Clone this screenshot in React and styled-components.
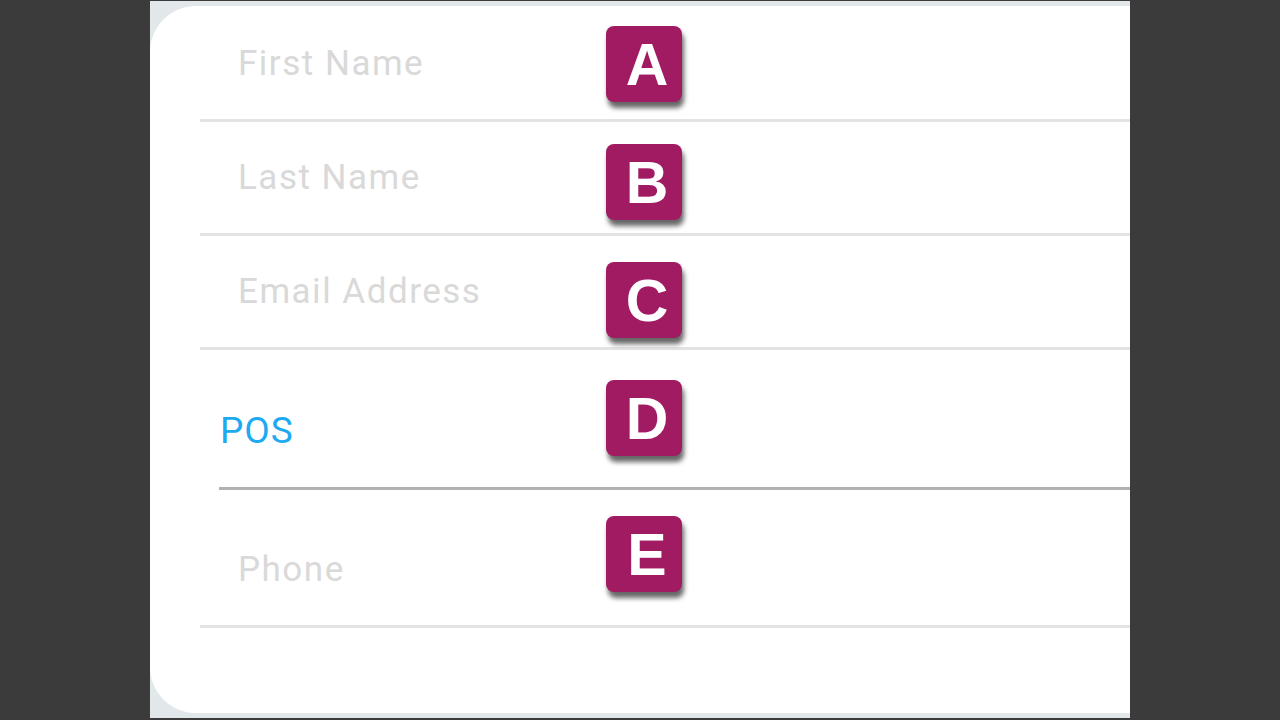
import styled, {createGlobalStyle} from 'styled-components';

const GlobalStyle = createGlobalStyle`
    html, body {
        margin:0;
        padding:0;
        background:#3b3b3b;
    }
`

const Stage = styled.div`
    width:1280px;
    height:720px;
    display:flex;
    justify-content:center;
    padding-top:1px;
    box-sizing:border-box;
`

const Frame = styled.div`
    width:980px;
    height:717px;
    background:#e2e8ea;
    padding:5px 0;
    box-sizing:border-box;
    overflow:hidden;
`

const Card = styled.div`
    height:100%;
    background:#ffffff;
    border-radius:46px 0 0 46px;
    padding:2px 0 0 50px;
    box-sizing:border-box;
    display:flex;
    flex-direction:column;
`

const Row = styled.div`
    display:flex;
    align-items:flex-start;
    height:${props => props.tall ? '135px' : '111px'};
    border-bottom:3px solid #e3e3e3;
    flex-shrink:0;
`

const Label = styled.div`
    width:368px;
    padding:${props => props.top}px 0 0 38px;
    font-family:Roboto, "Noto Sans", sans-serif;
    font-size:35px;
    line-height:35px;
    letter-spacing:1.5px;
    color:#d9d9d9;
`

const PickerRow = styled.div`
    display:flex;
    align-items:flex-start;
    height:137px;
    margin-left:19px;
    border-bottom:3px solid #b1b1b1;
    flex-shrink:0;
`

const PickerValue = styled.div`
    width:386px;
    padding:62px 0 0 1px;
    font-family:Roboto, "Noto Sans", sans-serif;
    font-size:37px;
    line-height:37px;
    letter-spacing:1px;
    color:#1eaaf1;
`

const Badge = styled.div`
    margin-top:${props => props.top}px;
    width:76px;
    height:76px;
    flex-shrink:0;
    border-radius:8px;
    background:#a11b63;
    box-shadow:2px 6px 5px rgba(0,0,0,0.6);
    display:flex;
    align-items:center;
    justify-content:center;
    color:#ffffff;
    font-family:"Liberation Sans", Arial, sans-serif;
    font-weight:700;
    font-size:59px;
    line-height:1;
    padding:3px 0 0 6px;
    box-sizing:border-box;
`

const fields = [
    {label:'First Name', badge:'A', badgeTop:18},
    {label:'Last Name', badge:'B', badgeTop:22},
    {label:'Email Address', badge:'C', badgeTop:26},
]

const App = () => {
    return (
        <Stage>
            <GlobalStyle/>
            <Frame>
                <Card>
                    {fields.map(f => (
                        <Row key={f.badge}>
                            <Label top={38}>{f.label}</Label>
                            <Badge top={f.badgeTop}>{f.badge}</Badge>
                        </Row>
                    ))}
                    <PickerRow>
                        <PickerValue>POS</PickerValue>
                        <Badge top={30}>D</Badge>
                    </PickerRow>
                    <Row tall>
                        <Label top={62}>Phone</Label>
                        <Badge top={26}>E</Badge>
                    </Row>
                </Card>
            </Frame>
        </Stage>
    );
}

export default App;
